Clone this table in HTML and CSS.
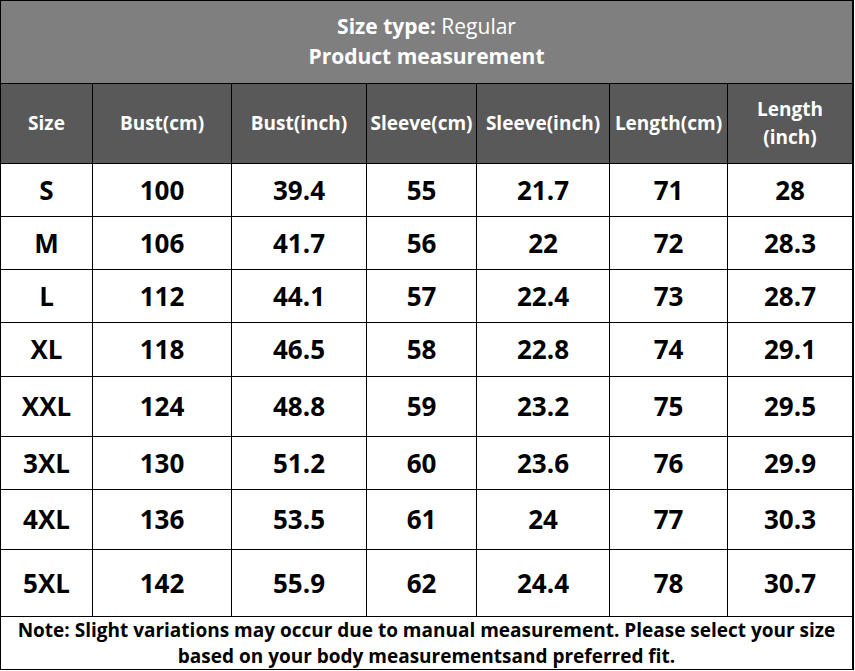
FILE: index.html
```html
<!DOCTYPE html>
<html>
<head>
<meta charset="utf-8">
<link rel="stylesheet" href="styles.css">
</head>
<body>
<div class="chart">
  <div class="title"><div><b>Size type:</b> Regular</div><div><b>Product measurement</b></div></div>
  <div class="hd">Size</div>
  <div class="hd">Bust(cm)</div>
  <div class="hd">Bust(inch)</div>
  <div class="hd">Sleeve(cm)</div>
  <div class="hd">Sleeve(inch)</div>
  <div class="hd">Length(cm)</div>
  <div class="hd">Length<br>(inch)</div>

  <div class="c">S</div><div class="c">100</div><div class="c">39.4</div><div class="c">55</div><div class="c">21.7</div><div class="c">71</div><div class="c">28</div>
  <div class="c">M</div><div class="c">106</div><div class="c">41.7</div><div class="c">56</div><div class="c">22</div><div class="c">72</div><div class="c">28.3</div>
  <div class="c">L</div><div class="c">112</div><div class="c">44.1</div><div class="c">57</div><div class="c">22.4</div><div class="c">73</div><div class="c">28.7</div>
  <div class="c">XL</div><div class="c">118</div><div class="c">46.5</div><div class="c">58</div><div class="c">22.8</div><div class="c">74</div><div class="c">29.1</div>
  <div class="c">XXL</div><div class="c">124</div><div class="c">48.8</div><div class="c">59</div><div class="c">23.2</div><div class="c">75</div><div class="c">29.5</div>
  <div class="c">3XL</div><div class="c">130</div><div class="c">51.2</div><div class="c">60</div><div class="c">23.6</div><div class="c">76</div><div class="c">29.9</div>
  <div class="c">4XL</div><div class="c">136</div><div class="c">53.5</div><div class="c">61</div><div class="c">24</div><div class="c">77</div><div class="c">30.3</div>
  <div class="c">5XL</div><div class="c">142</div><div class="c">55.9</div><div class="c">62</div><div class="c">24.4</div><div class="c">78</div><div class="c">30.7</div>

  <div class="note">Note: Slight variations may occur due to manual measurement. Please select your size<br>based on your body measurementsand preferred fit.</div>
</div>
</body>
</html>
```

FILE: styles.css
```css
html, body {
  margin: 0;
  padding: 0;
  background: #ffffff;
}
.chart {
  display: grid;
  width: 854px;
  box-sizing: border-box;
  grid-template-columns: 91px 138px 134px 109px 132px 117px 124px;
  grid-template-rows: 82px 79px 52px 52px 52px 53px 59px 52px 59px 66px 52px;
  gap: 1px;
  padding: 1px 2px 1px 1px;
  background: #000000;
  font-family: "Open Sans", "Noto Sans", sans-serif;
}
.title {
  grid-column: 1 / -1;
  background: #7f7f7f;
  color: #ffffff;
  font-size: 21px;
  line-height: 30px;
  display: flex;
  flex-direction: column;
  justify-content: center;
  align-items: center;
  font-weight: 400;
  padding-bottom: 2px;
}
.title b {
  font-weight: 700;
}
.hd {
  background: #595959;
  color: #ffffff;
  font-weight: 700;
  font-size: 19px;
  line-height: 28px;
  display: flex;
  align-items: center;
  justify-content: center;
  text-align: center;
  white-space: nowrap;
  padding-bottom: 2px;
}
.c {
  background: #ffffff;
  color: #000000;
  font-weight: 700;
  font-size: 26px;
  display: flex;
  align-items: center;
  justify-content: center;
  padding-bottom: 1px;
}
.note {
  grid-column: 1 / -1;
  background: #ffffff;
  color: #000000;
  font-weight: 700;
  font-size: 19px;
  line-height: 26px;
  text-align: center;
  display: flex;
  align-items: center;
  justify-content: center;
  white-space: nowrap;
}
```
